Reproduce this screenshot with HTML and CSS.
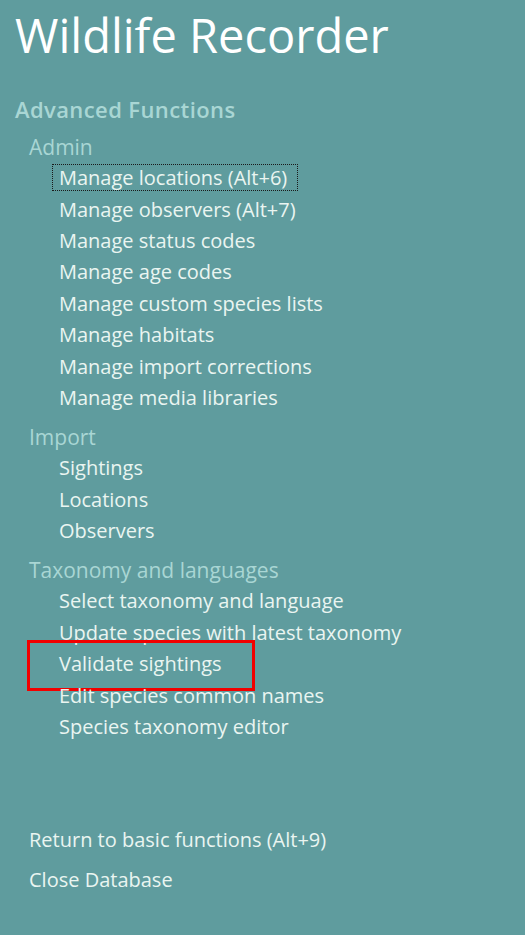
FILE: index.html
```html
<!DOCTYPE html>
<html>
<head>
<meta charset="utf-8">
<link rel="stylesheet" href="styles.css">
</head>
<body>
<div class="app">
  <h1 class="title">Wildlife Recorder</h1>
  <div class="section-title">Advanced Functions</div>

  <div class="group">
    <div class="group-title">Admin</div>
    <ul class="items">
      <li><a class="item focused">Manage locations (Alt+6)</a></li>
      <li><a class="item">Manage observers (Alt+7)</a></li>
      <li><a class="item">Manage status codes</a></li>
      <li><a class="item">Manage age codes</a></li>
      <li><a class="item">Manage custom species lists</a></li>
      <li><a class="item">Manage habitats</a></li>
      <li><a class="item">Manage import corrections</a></li>
      <li><a class="item">Manage media libraries</a></li>
    </ul>
  </div>

  <div class="group">
    <div class="group-title">Import</div>
    <ul class="items">
      <li><a class="item">Sightings</a></li>
      <li><a class="item">Locations</a></li>
      <li><a class="item">Observers</a></li>
    </ul>
  </div>

  <div class="group">
    <div class="group-title">Taxonomy and languages</div>
    <ul class="items">
      <li><a class="item">Select taxonomy and language</a></li>
      <li><a class="item">Update species with latest taxonomy</a></li>
      <li class="highlighted"><a class="item">Validate sightings</a><span class="annotation"></span></li>
      <li><a class="item">Edit species common names</a></li>
      <li><a class="item">Species taxonomy editor</a></li>
    </ul>
  </div>

  <div class="footer-links">
    <a class="footer-link">Return to basic functions (Alt+9)</a>
    <a class="footer-link">Close Database</a>
  </div>
</div>
</body>
</html>
```

FILE: styles.css
```css
html, body {
  margin: 0;
  padding: 0;
}

body {
  background: #5f9c9e;
  font-family: "Open Sans", "Noto Sans", sans-serif;
  width: 525px;
  height: 935px;
  overflow: hidden;
}

.app {
  padding: 4px 0 0 15px;
}

.title {
  margin: 0;
  font-size: 47px;
  font-weight: 400;
  line-height: 62px;
  color: #ffffff;
}

.section-title {
  margin-top: 29px;
  font-size: 22px;
  font-weight: 600;
  line-height: 28px;
  color: #a9d6d4;
  letter-spacing: 0.4px;
}

.group {
  margin-top: 10px;
}

.group-title {
  padding-left: 14px;
  font-size: 21px;
  line-height: 28px;
  color: #a9d6d4;
}

.items {
  list-style: none;
  margin: 0;
  padding: 1px 0 0 37px;
}

.items li {
  position: relative;
  height: 31.4px;
  display: flex;
  align-items: center;
}

.item {
  display: inline-block;
  padding: 0 6px;
  border: 1px dotted transparent;
  font-size: 20px;
  line-height: 25px;
  color: #eaf5f1;
  white-space: nowrap;
}

.item.focused {
  border-color: #1a1a1a;
  padding-right: 10px;
}

.annotation {
  position: absolute;
  left: -25px;
  top: -8px;
  width: 222px;
  height: 45px;
  border: 3px solid #f20000;
}

.footer-links {
  margin-top: 84px;
  padding-left: 14px;
  display: flex;
  flex-direction: column;
  gap: 13px;
}

.footer-link {
  font-size: 20px;
  line-height: 27px;
  color: #eaf5f1;
}
```
